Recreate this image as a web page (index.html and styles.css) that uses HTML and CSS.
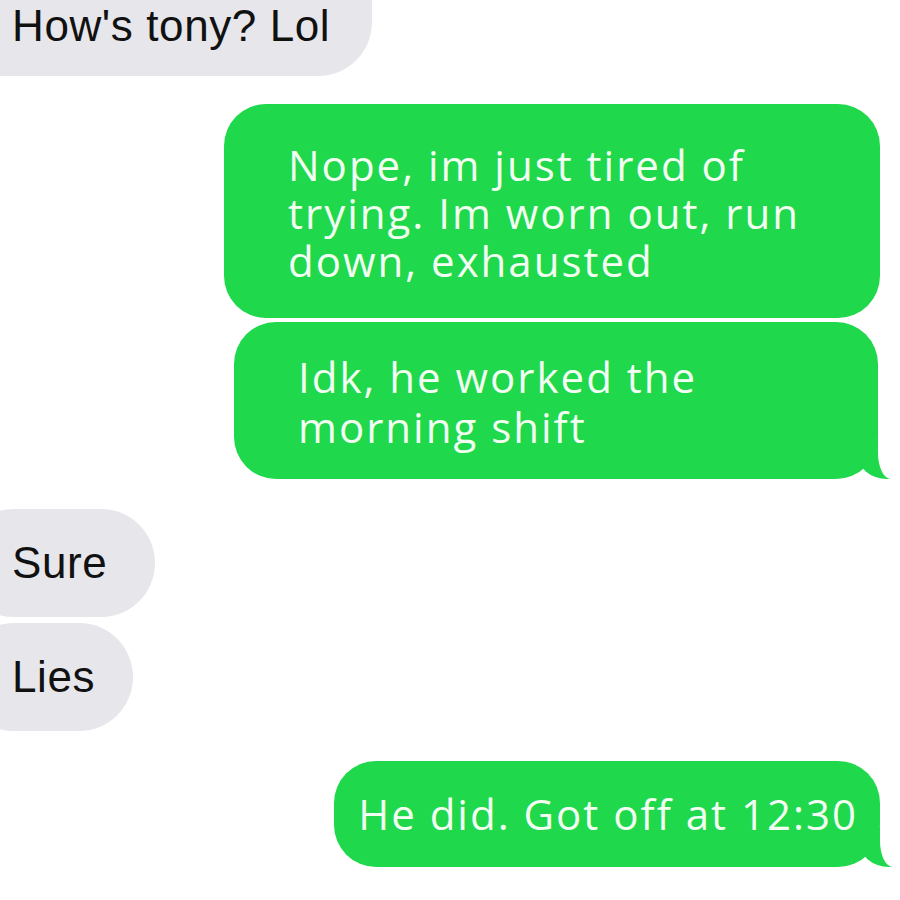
FILE: index.html
```html
<!DOCTYPE html>
<html lang="en">
<head>
    <meta charset="UTF-8">
    <title>Messages</title>
    <link rel="stylesheet" href="styles.css">
</head>
<body>
    <div class="thread">
        <div class="msg them first">How's tony? Lol</div>

        <div class="msg me wide1">Nope, im just tired of trying. Im worn out, run down, exhausted</div>
        <div class="msg me wide2 tail">Idk, he worked the morning shift</div>

        <div class="msg them gap-top">Sure</div>
        <div class="msg them short">Lies</div>

        <div class="msg me tail gap-top">He did. Got off at 12:30</div>
    </div>
</body>
</html>
```

FILE: styles.css
```css
/* Basis */
html, body {
    margin: 0;
    padding: 0;
    background: #fff;
    overflow: hidden;
}

.thread {
    display: flex;
    flex-direction: column;
    gap: 6px;
    width: 900px;
}

.msg {
    position: relative;
    line-height: 50px;
}

/* Grå beskeder (modtaget) */
.them {
    align-self: flex-start;
    background-color: #e6e6eb;
    color: #111;
    font-family: 'Liberation Sans', Arial, sans-serif;
    font-size: 44px;
    letter-spacing: 0.6px;
    margin-left: -40px;
    padding: 29px 48px 29px 52px;
    border-radius: 54px;
}

.them.first {
    margin-top: 0;
    margin-bottom: 22px;
    padding: 4px 42px 28px 52px;
    line-height: 44px;
    border-radius: 0 0 54px 0;
}

.them.short {
    padding-right: 38px;
}

/* Grønne beskeder (sendt) */
.me {
    align-self: flex-end;
    background-color: #1fd84b;
    color: #f2fff2;
    font-family: 'Open Sans', sans-serif;
    font-size: 42px;
    letter-spacing: 2px;
    margin-right: 20px;
    padding: 28px 22px 28px 24px;
    border-radius: 42px;
    box-sizing: border-box;
}

.wide1 {
    width: 656px;
    padding: 37px 50px 33px 64px;
    line-height: 48px;
}

.wide2 {
    width: 644px;
    margin-top: -2px;
    margin-right: 22px;
    padding: 30px 150px 27px 64px;
}

.gap-top {
    margin-top: 24px;
}

/* Hale på boblen */
.tail::before {
    content: "";
    position: absolute;
    bottom: 0;
    right: -13px;
    height: 40px;
    border-right: 34px solid #1fd84b;
    border-bottom-left-radius: 30px 26px;
}

.tail::after {
    content: "";
    position: absolute;
    bottom: 0;
    right: -18px;
    width: 18px;
    height: 42px;
    background: #fff;
    border-bottom-left-radius: 13px 26px;
}
```
